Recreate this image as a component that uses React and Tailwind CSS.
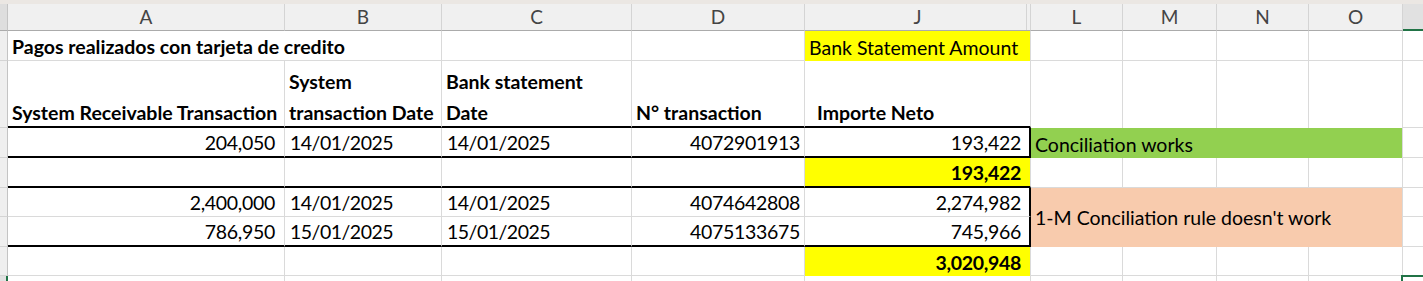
const BOTTOM = {
  grid: 'border-b border-b-[#dadada]',
  thick: 'border-b-2 border-b-black',
  none: '',
};
const RIGHT = {
  grid: 'border-r border-r-[#dadada]',
  thick: 'border-r-2 border-r-black',
  none: '',
};
const ALIGN = {
  end: 'items-end pb-[2px]',
  center: 'items-center',
};

function Cell({ children, b = 'grid', r = 'grid', align = 'end', className = '' }) {
  return (
    <div className={`flex px-[4px] leading-[23px] whitespace-nowrap ${ALIGN[align]} ${BOTTOM[b]} ${RIGHT[r]} ${className}`}>
      {children}
    </div>
  );
}

function RowHead({ selected }) {
  return selected ? (
    <div className="bg-[#e1e1e1] border-r-2 border-r-[#217346]" />
  ) : (
    <div className="bg-[#efefef] border-r border-r-[#c4c4c4] border-b border-b-[#d4d4d4]" />
  );
}

function ColHead({ label, className = '' }) {
  return (
    <div className={`flex items-center justify-center bg-[#f0f0f0] text-[#444] text-[19px] border-r border-r-[#d4d4d4] border-b border-b-[#ababab] ${className}`}>
      {label}
    </div>
  );
}

export default function App() {
  return (
    <div className="w-[1423px] h-[281px] overflow-hidden bg-white text-black text-[19.5px] font-['Lato',sans-serif]">
      <div className="h-[4px] bg-[#ebe7e3]" />
      <div className="grid grid-cols-[8px_277px_157px_190px_173px_226px_92px_94px_92px_94px_1fr] grid-rows-[27px_30px_67px_30px_30px_29px_30px_29px_10px]">
        {/* column headers */}
        <div className="bg-[#dedede] border-r border-r-[#c4c4c4] border-b border-b-[#ababab]" />
        <ColHead label="A" />
        <ColHead label="B" />
        <ColHead label="C" />
        <ColHead label="D" />
        <ColHead label="J" className="shadow-[inset_-3px_0_0_#f0f0f0,inset_-4px_0_0_#d4d4d4]" />
        <ColHead label="L" />
        <ColHead label="M" />
        <ColHead label="N" />
        <ColHead label="O" />
        <div className="bg-[#e1e1e1] border-b-2 border-b-[#217346]" />

        {/* row 1 */}
        <RowHead />
        <Cell className="col-span-2 font-bold">Pagos realizados con tarjeta de credito</Cell>
        <Cell />
        <Cell />
        <Cell b="none" className="bg-[#ffff00]">Bank Statement Amount</Cell>
        <Cell />
        <Cell />
        <Cell />
        <Cell />
        <Cell r="none" />

        {/* row 2 */}
        <RowHead />
        <Cell b="thick" className="font-bold">System Receivable Transaction</Cell>
        <Cell b="thick" className="font-bold">
          <div className="flex flex-col gap-[8px]">
            <span>System</span>
            <span>transaction Date</span>
          </div>
        </Cell>
        <Cell b="thick" className="font-bold">
          <div className="flex flex-col gap-[8px]">
            <span>Bank statement</span>
            <span>Date</span>
          </div>
        </Cell>
        <Cell b="thick" className="font-bold">N° transaction</Cell>
        <Cell b="thick" className="font-bold pl-[12px]">Importe Neto</Cell>
        <Cell b="none" />
        <Cell b="none" />
        <Cell b="none" />
        <Cell b="none" />
        <Cell r="none" />

        {/* row 3 */}
        <RowHead />
        <Cell b="thick" className="justify-end pr-[9px] tracking-[-0.3px]">204,050</Cell>
        <Cell b="thick" className="pl-[5px] tracking-[-0.5px]">14/01/2025</Cell>
        <Cell b="thick" className="pl-[5px] tracking-[-0.5px]">14/01/2025</Cell>
        <Cell b="thick" className="justify-end tracking-[-0.3px]">4072901913</Cell>
        <Cell b="thick" r="thick" className="justify-end pr-[8px] tracking-[-0.3px]">193,422</Cell>
        <Cell b="none" className="col-span-4 bg-[#92d050]">Conciliation works</Cell>
        <Cell r="none" />

        {/* row 4 */}
        <RowHead />
        <Cell b="thick" />
        <Cell b="thick" />
        <Cell b="thick" />
        <Cell b="thick" />
        <Cell b="thick" className="bg-[#ffff00] justify-end pr-[9px] font-bold tracking-[-0.3px]">193,422</Cell>
        <Cell />
        <Cell />
        <Cell />
        <Cell />
        <Cell r="none" />

        {/* row 5 */}
        <RowHead />
        <Cell className="justify-end pr-[9px] tracking-[-0.3px]">2,400,000</Cell>
        <Cell className="pl-[5px] tracking-[-0.5px]">14/01/2025</Cell>
        <Cell className="pl-[5px] tracking-[-0.5px]">14/01/2025</Cell>
        <Cell className="justify-end tracking-[-0.3px]">4074642808</Cell>
        <Cell r="thick" className="justify-end pr-[8px] tracking-[-0.3px]">2,274,982</Cell>
        <Cell b="none" align="center" className="col-span-4 row-span-2 bg-[#f8cbad]">1-M Conciliation rule doesn't work</Cell>
        <Cell r="none" />

        {/* row 6 */}
        <RowHead />
        <Cell b="thick" className="justify-end pr-[9px] tracking-[-0.3px]">786,950</Cell>
        <Cell b="thick" className="pl-[5px] tracking-[-0.5px]">15/01/2025</Cell>
        <Cell b="thick" className="pl-[5px] tracking-[-0.5px]">15/01/2025</Cell>
        <Cell b="thick" className="justify-end tracking-[-0.3px]">4075133675</Cell>
        <Cell b="thick" r="thick" className="justify-end pr-[8px] tracking-[-0.3px]">745,966</Cell>
        <Cell r="none" />

        {/* row 7 */}
        <RowHead />
        <Cell />
        <Cell />
        <Cell />
        <Cell />
        <Cell b="none" className="bg-[#ffff00] justify-end pr-[9px] font-bold tracking-[-0.3px]">3,020,948</Cell>
        <Cell />
        <Cell />
        <Cell />
        <Cell />
        <Cell r="none" />

        {/* row 8 */}
        <RowHead selected />
        <Cell b="none" />
        <Cell b="none" />
        <Cell b="none" />
        <Cell b="none" />
        <Cell b="none" />
        <Cell b="none" />
        <Cell b="none" />
        <Cell b="none" />
        <Cell b="none" />
        <div className="relative">
          <div className="absolute left-[-2px] top-[-1px] right-0 h-[10px] border-t-2 border-l-2 border-[#217346]" />
        </div>
      </div>
    </div>
  );
}
